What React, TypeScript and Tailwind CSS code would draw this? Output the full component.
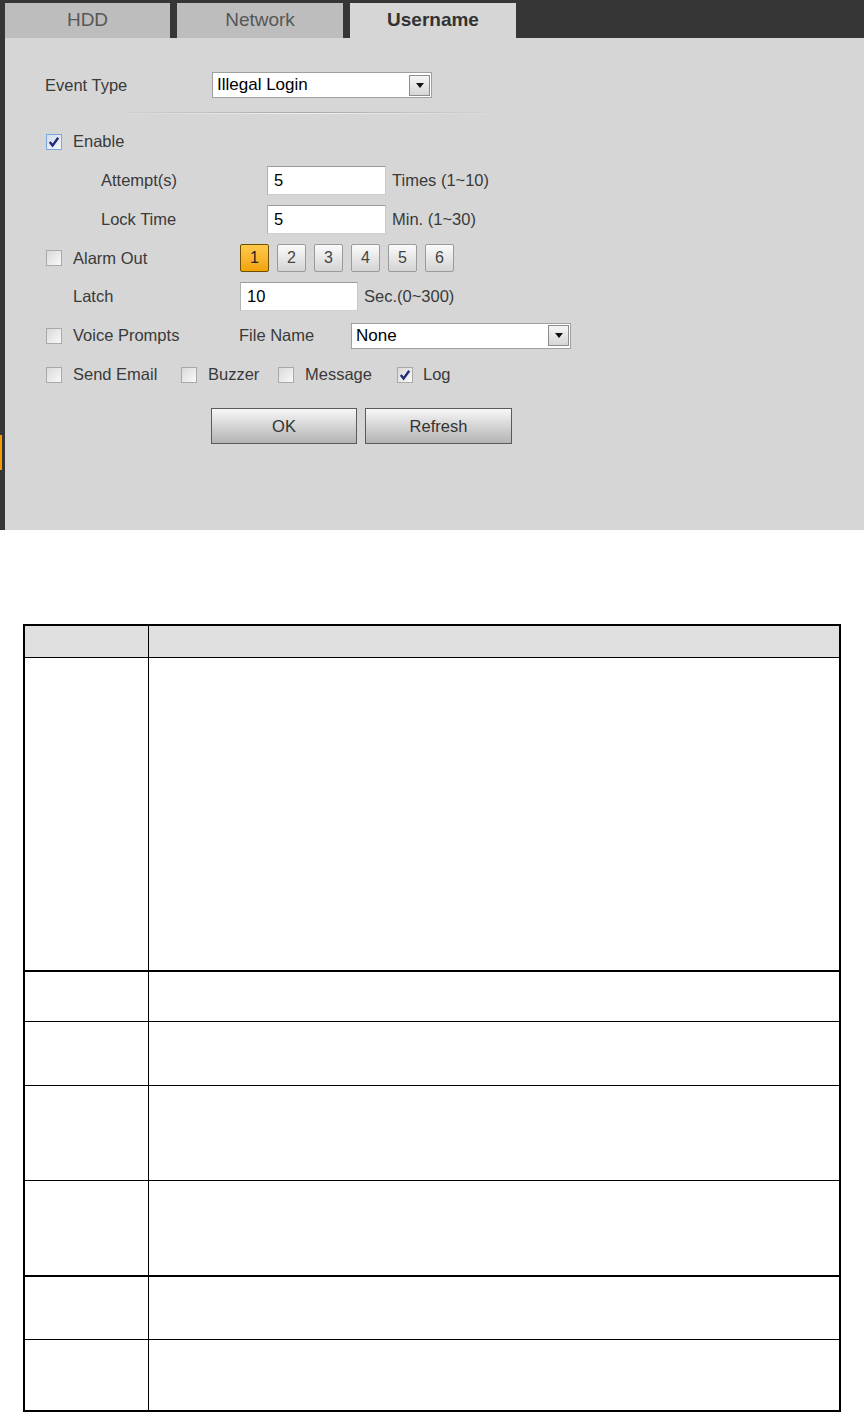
import React from "react";

const font = { fontFamily: '"Liberation Sans", Arial, sans-serif' };

const Check = ({ checked, focus }: { checked?: boolean; focus?: boolean }) => (
  <span
    className={`flex h-[16px] w-[16px] shrink-0 items-center justify-center border bg-gradient-to-br ${
      focus ? "border-[#7ba7dc] from-[#cfdcec] to-[#f4f8fc]" : "border-[#a9a9a9] from-[#d9d9d9] to-[#fafafa]"
    }`}
  >
    {checked && (
      <svg width="12" height="12" viewBox="0 0 12 12">
        <path d="M1.8 6 L4.6 9.6 L10.2 1.8" fill="none" stroke="#1f2c78" strokeWidth="2.4" />
      </svg>
    )}
  </span>
);

const Arrow = () => (
  <span className="flex h-[21px] w-[21px] items-center justify-center border border-[#8c8c8c] bg-gradient-to-b from-[#f6f6f6] to-[#d6d6d6]">
    <svg width="8" height="5" viewBox="0 0 8 5">
      <path d="M0 0 H8 L4 5 Z" fill="#111" />
    </svg>
  </span>
);

const Select = ({ value, width }: { value: string; width: string }) => (
  <div className={`flex h-[26px] items-center justify-between border border-[#a0a0a0] bg-white pl-[4px] pr-[1px] ${width}`}>
    <span className="text-[17px] text-black">{value}</span>
    <Arrow />
  </div>
);

const Input = ({ value, width }: { value: string; width: string }) => (
  <div className={`flex h-[29px] items-center border border-t-[#9a9a9a] border-l-[#b0b0b0] border-r-[#c8c8c8] border-b-[#cfcfcf] bg-white pl-[6px] ${width}`}>
    <span className="text-[16.5px] text-black">{value}</span>
  </div>
);

const NumBtn = ({ n, active }: { n: number; active?: boolean }) => (
  <div
    className={`flex h-[28px] w-[29px] items-center justify-center rounded-[2px] border text-[16px] ${
      active
        ? "border-[#6e5100] bg-gradient-to-b from-[#ffc94a] to-[#f3a300] text-[#222]"
        : "border-[#9a9a9a] bg-gradient-to-b from-[#fbfbfb] to-[#d4d4d4] text-[#444]"
    }`}
  >
    {n}
  </div>
);

// heights include the bottom border
const tableRows: { h: string; border: string }[] = [
  { h: "h-[314px]", border: "border-b-2" },
  { h: "h-[50px]", border: "border-b" },
  { h: "h-[64px]", border: "border-b" },
  { h: "h-[95px]", border: "border-b" },
  { h: "h-[96px]", border: "border-b-2" },
  { h: "h-[63px]", border: "border-b" },
  { h: "h-[70px]", border: "" },
];

export default function App() {
  return (
    <div className="w-[864px] bg-white" style={font}>
      {/* device config screenshot */}
      <div className="relative h-[530px] bg-[#363636]">
        <div className="absolute left-0 top-[435px] h-[35px] w-[2px] bg-[#f59a00]" />
        <div className="flex h-[38px] gap-[7px] pl-[5px] pt-[3px]">
          <div className="flex h-[35px] w-[165px] items-center justify-center bg-[#bdbdbd] text-[19px] text-[#575757]">HDD</div>
          <div className="flex h-[35px] w-[166px] items-center justify-center bg-[#bdbdbd] text-[19px] text-[#575757]">Network</div>
          <div className="flex h-[35px] w-[166px] items-center justify-center bg-[#d6d6d6] text-[19px] font-bold text-[#333]">Username</div>
        </div>
        <div className="ml-[5px] h-[492px] bg-[#d6d6d6] pl-[40px] pt-[28px] text-[16.5px] text-[#3a3a3a]">
          <div className="flex h-[38px] items-center">
            <span className="w-[167px]">Event Type</span>
            <Select value="Illegal Login" width="w-[220px]" />
          </div>
          <div className="flex h-[18px] items-center pl-[65px]">
            <div className="w-[390px]">
              <div className="h-px bg-gradient-to-r from-transparent via-[#a8a8a8] to-transparent" />
              <div className="h-px bg-gradient-to-r from-transparent via-[#f0f0f0] to-transparent" />
            </div>
          </div>
          <div className="flex h-[39px] items-center pl-px">
            <Check checked focus />
            <span className="ml-[11px]">Enable</span>
          </div>
          <div className="flex h-[39px] items-center pl-[56px]">
            <span className="w-[166px]">Attempt(s)</span>
            <Input value="5" width="w-[119px]" />
            <span className="ml-[6px]">Times (1~10)</span>
          </div>
          <div className="flex h-[39px] items-center pl-[56px]">
            <span className="w-[166px]">Lock Time</span>
            <Input value="5" width="w-[119px]" />
            <span className="ml-[6px]">Min. (1~30)</span>
          </div>
          <div className="flex h-[38px] items-center pl-px">
            <Check />
            <span className="ml-[11px] w-[167px]">Alarm Out</span>
            <div className="flex gap-[8px]">
              {[1, 2, 3, 4, 5, 6].map((n) => (
                <NumBtn key={n} n={n} active={n === 1} />
              ))}
            </div>
          </div>
          <div className="flex h-[39px] items-center pl-[28px]">
            <span className="w-[167px]">Latch</span>
            <Input value="10" width="w-[118px]" />
            <span className="ml-[6px]">Sec.(0~300)</span>
          </div>
          <div className="flex h-[39px] items-center pl-px">
            <Check />
            <span className="ml-[11px] w-[166px]">Voice Prompts</span>
            <span className="w-[112px]">File Name</span>
            <Select value="None" width="w-[220px]" />
          </div>
          <div className="flex h-[39px] items-center pl-px">
            <Check />
            <span className="ml-[11px] w-[108px]">Send Email</span>
            <Check />
            <span className="ml-[11px] w-[70px]">Buzzer</span>
            <Check />
            <span className="ml-[11px] w-[92px]">Message</span>
            <Check checked />
            <span className="ml-[10px]">Log</span>
          </div>
          <div className="mt-[14px] flex gap-[8px] pl-[166px]">
            <div className="flex h-[36px] w-[146px] items-center justify-center border border-[#5a5a5a] bg-gradient-to-b from-[#f7f7f7] to-[#b4b4b4] text-[16.5px] text-[#333]">
              OK
            </div>
            <div className="flex h-[36px] w-[147px] items-center justify-center border border-[#5a5a5a] bg-gradient-to-b from-[#f7f7f7] to-[#b4b4b4] text-[16.5px] text-[#333]">
              Refresh
            </div>
          </div>
        </div>
      </div>

      {/* parameter table */}
      <div className="ml-[23px] mt-[94px] w-[818px] border-2 border-black">
        <div className="flex h-[32px] border-b border-black bg-[#e0e0e0]">
          <div className="w-[124px] border-r border-black" />
          <div className="flex-1" />
        </div>
        {tableRows.map((r, i) => (
          <div key={i} className={`flex border-black ${r.h} ${r.border}`}>
            <div className="w-[124px] border-r border-black" />
            <div className="flex-1" />
          </div>
        ))}
      </div>
    </div>
  );
}
